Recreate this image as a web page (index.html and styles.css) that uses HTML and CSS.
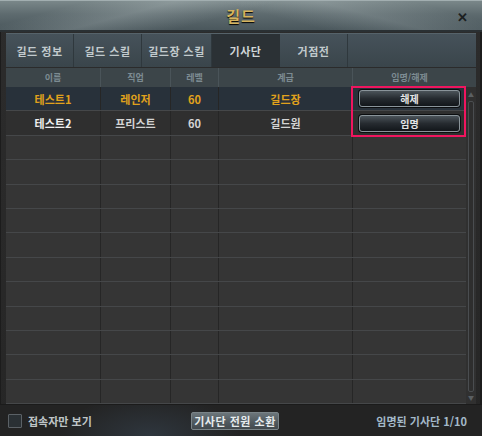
FILE: index.html
```html
<!DOCTYPE html>
<html lang="ko">
<head>
<meta charset="utf-8">
<link rel="stylesheet" href="styles.css">
</head>
<body>
<div class="window">
  <div class="titlebar">
    <span class="title">길드</span>
    <span class="close">✕</span>
  </div>
  <div class="body">
    <div class="tabs">
      <div class="tab w0">길드 정보</div>
      <div class="tab w1">길드 스킬</div>
      <div class="tab w2">길드장 스킬</div>
      <div class="tab w1 active">기사단</div>
      <div class="tab w1">거점전</div>
      <div class="tab rest"></div>
    </div>
    <div class="grid-wrap">
      <div class="row head">
        <div class="c c1">이름</div>
        <div class="c c2">직업</div>
        <div class="c c3">레벨</div>
        <div class="c c4">계급</div>
        <div class="c c5">임명/해제</div>
      </div>
      <div class="grid-body">
        <div class="rows">
          <div class="row r sel">
            <div class="c c1">테스트1</div>
            <div class="c c2">레인저</div>
            <div class="c c3">60</div>
            <div class="c c4">길드장</div>
            <div class="c c5"><span class="btn">해제</span></div>
          </div>
          <div class="row r second">
            <div class="c c1">테스트2</div>
            <div class="c c2">프리스트</div>
            <div class="c c3">60</div>
            <div class="c c4">길드원</div>
            <div class="c c5"><span class="btn">임명</span></div>
          </div>
          <div class="row r e"><div class="c c1"></div><div class="c c2"></div><div class="c c3"></div><div class="c c4"></div><div class="c c5"></div></div>
          <div class="row r e"><div class="c c1"></div><div class="c c2"></div><div class="c c3"></div><div class="c c4"></div><div class="c c5"></div></div>
          <div class="row r e"><div class="c c1"></div><div class="c c2"></div><div class="c c3"></div><div class="c c4"></div><div class="c c5"></div></div>
          <div class="row r e"><div class="c c1"></div><div class="c c2"></div><div class="c c3"></div><div class="c c4"></div><div class="c c5"></div></div>
          <div class="row r e"><div class="c c1"></div><div class="c c2"></div><div class="c c3"></div><div class="c c4"></div><div class="c c5"></div></div>
          <div class="row r e"><div class="c c1"></div><div class="c c2"></div><div class="c c3"></div><div class="c c4"></div><div class="c c5"></div></div>
          <div class="row r e"><div class="c c1"></div><div class="c c2"></div><div class="c c3"></div><div class="c c4"></div><div class="c c5"></div></div>
          <div class="row r e"><div class="c c1"></div><div class="c c2"></div><div class="c c3"></div><div class="c c4"></div><div class="c c5"></div></div>
          <div class="row r e"><div class="c c1"></div><div class="c c2"></div><div class="c c3"></div><div class="c c4"></div><div class="c c5"></div></div>
          <div class="row r e"><div class="c c1"></div><div class="c c2"></div><div class="c c3"></div><div class="c c4"></div><div class="c c5"></div></div>
          <div class="row r e"><div class="c c1"></div><div class="c c2"></div><div class="c c3"></div><div class="c c4"></div><div class="c c5"></div></div>
          <div class="highlight"></div>
        </div>
        <div class="scrollbar">
          <span class="arrow up">▲</span>
          <span class="track"></span>
          <span class="arrow down">▼</span>
        </div>
      </div>
    </div>
  </div>
  <div class="footer">
    <label class="check"><span class="box"></span>접속자만 보기</label>
    <span class="summon">기사단 전원 소환</span>
    <span class="count">임명된 기사단 1/10</span>
  </div>
</div>
</body>
</html>
```
FILE: styles.css
```css
* { box-sizing: border-box; }
html, body { margin: 0; padding: 0; background: #1e1e1e; }
body { font-family: "Noto Sans CJK KR", "Noto Sans", sans-serif; }
.window {
  width: 482px; height: 436px; position: relative; overflow: hidden;
  background: linear-gradient(180deg, #2c2c2c 0%, #262626 100%);
  display: flex; flex-direction: column;
}
.titlebar {
  height: 32px; flex: none; position: relative;
  display: flex; align-items: center; justify-content: center;
  background:
    linear-gradient(165deg, rgba(255,255,255,0) 15%, rgba(230,240,240,0.18) 30%, rgba(255,255,255,0) 48%),
    linear-gradient(15deg, rgba(255,255,255,0) 55%, rgba(230,240,240,0.14) 72%, rgba(255,255,255,0) 88%),
    linear-gradient(180deg, #7a8789 0%, #5e6b6f 45%, #4a575c 100%);
  border-top: 1px solid #a2aeb0;
  border-bottom: 2px solid #2a3033;
}
.title { color: #d6b45e; font-weight: 700; font-size: 15px; letter-spacing: 1px; text-shadow: 0 1px 1px #000; }
.close { position: absolute; right: 14px; top: 6px; color: #1c1f21; font-size: 13px; font-weight: 700; }
.body { flex: 1; padding: 1px 4px 0 5px; display: flex; flex-direction: column;
  border-left: 1px solid #1c1c1c; border-right: 2px solid #1c1c1c; }
.tabs {
  height: 34px; flex: none; display: flex;
  background: linear-gradient(180deg, #46525a 0%, #3a454b 100%);
  border-top: 1px solid #56636a;
}
.tab {
  display: flex; align-items: center; justify-content: center;
  color: #c2cacd; font-size: 11px; font-weight: 700;
  border-right: 1px solid #2f383d; letter-spacing: 0.5px;
}
.w0 { width: 68px; }
.w1 { width: 68px; }
.w2 { width: 70px; }
.tab.active { background: #2b3135; color: #d0d6d8; border-right-color: #2b3135; }
.tab.rest { flex: 1; border-right: none; }
.grid-wrap { flex: 1; display: flex; flex-direction: column; padding-top: 1px; }
.grid-body { flex: 1; display: flex; }
.row { display: flex; }
.c { display: flex; align-items: center; justify-content: center; border-right: 1px solid #252525; }
.c1 { width: 95px; }
.c2 { width: 70px; }
.c3 { width: 48px; }
.c4 { width: 134px; }
.c5 { width: 113px; border-right: none; }
.head { height: 19px; background: #3c4549; }
.head .c { color: #7c8b92; font-size: 9px; font-weight: 700; border-right-color: #4a5459; }
.rows { width: 460px; display: flex; flex-direction: column; position: relative; }
.r { flex: 1; background: #353535; border-bottom: 1px solid #454749; font-size: 11px; font-weight: 700; color: #d4d4d4; }
.r .c { border-right: 1px solid #262626; }
.r .c5 { flex: 1; border-right: none; }
.sel { background: #28313a; color: #e0a21c; }
.second { background: #2f2f2f; }
.second .c1 { color: #f0f0f0; }
.btn {
  width: 101px; height: 17px; display: flex; align-items: center; justify-content: center;
  border-radius: 3px; font-size: 10px; color: #e6e6e6; font-weight: 700;
  background: linear-gradient(180deg, #4b5359 0%, #262b30 50%, #12161a 100%);
  border: 1px solid #8a949a;
  box-shadow: 0 0 0 1px #0b0d0f;
}
.highlight {
  position: absolute; left: 345px; top: -1px; width: 115px; height: 51px;
  border: 2px solid #f0155f; pointer-events: none;
}
.scrollbar { width: 12px; display: flex; flex-direction: column; align-items: center;
  background: #303030; padding: 4px 0 2px; }
.arrow { font-size: 6px; color: #5a5f62; line-height: 8px; }
.track { flex: 1; width: 6px; border: 1px solid #4a4d50; border-radius: 2px; margin: 2px 0; background: #2e2e2e; }
.footer {
  height: 32px; flex: none; display: flex; align-items: center; position: relative;
  padding: 0 15px 0 8px;
  border-top: 1px solid #1b1b1b;
  background:
    radial-gradient(ellipse 90px 40px at 150px 30px, rgba(80,110,140,0.25), rgba(0,0,0,0)),
    #232323;
}
.check { display: flex; align-items: center; color: #bfc5c7; font-size: 11px; font-weight: 700; width: 183px; }
.box { width: 14px; height: 14px; border: 1px solid #5b6166; background: #2a3034; margin-right: 6px; border-radius: 1px; }
.summon {
  width: 88px; height: 18px; display: flex; align-items: center; justify-content: center;
  font-size: 11px; font-weight: 700; color: #e7ecee; letter-spacing: 0.5px;
  background: linear-gradient(180deg, #6c767b 0%, #4f585d 60%, #42494d 100%);
  border: 1px solid #7a8488; border-radius: 2px;
}
.count { margin-left: auto; color: #a3b9c8; font-size: 11px; font-weight: 700; }
```
